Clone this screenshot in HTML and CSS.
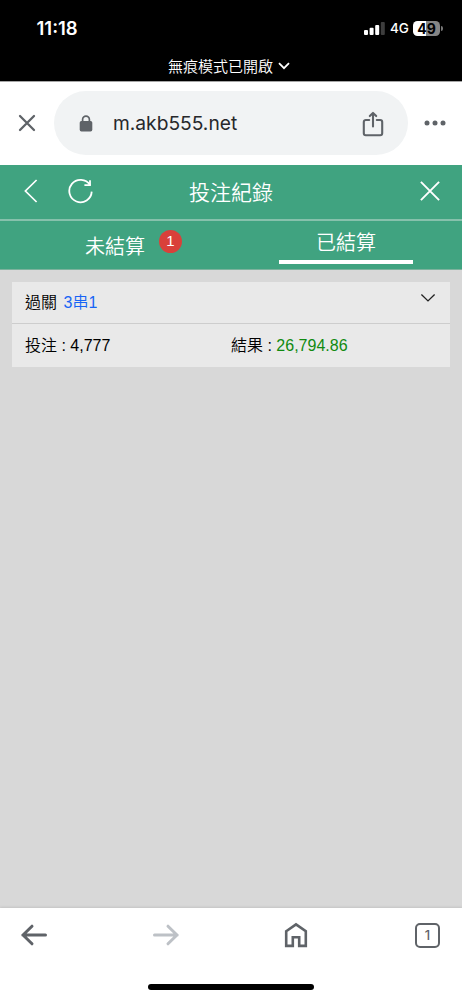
FILE: index.html
```
<!DOCTYPE html>
<html lang="zh-Hant">
<head>
<meta charset="utf-8">
<meta name="viewport" content="width=device-width, initial-scale=1">
<title>投注紀錄</title>
<link rel="stylesheet" href="styles.css">
</head>
<body>
<div class="phone">
  <header class="status">
    <div class="status-row">
      <span class="time">11:18</span>
      <svg class="signal" width="21" height="13" viewBox="0 0 21 13">
        <rect x="0" y="8" width="4" height="5" rx="1" fill="#fff"/>
        <rect x="5.6" y="5.8" width="4" height="7.2" rx="1" fill="#fff"/>
        <rect x="11.2" y="3" width="4" height="10" rx="1" fill="#fff"/>
        <rect x="16.8" y="0" width="4" height="13" rx="1" fill="#3d3d3d"/>
      </svg>
      <span class="network">4G</span>
      <span class="battery">49</span>
      <span class="battery-tip"></span>
    </div>
    <div class="private"><span>無痕模式已開啟</span>
      <svg width="12" height="8" viewBox="0 0 12 8"><path d="M1 1.2 6 6.2 11 1.2" fill="none" stroke="#fff" stroke-width="1.8"/></svg>
    </div>
  </header>

  <div class="browser-bar">
    <svg class="stop" width="18" height="18" viewBox="0 0 18 18"><path d="M2 2 16 16M16 2 2 16" fill="none" stroke="#5f6368" stroke-width="2.3" stroke-linecap="round"/></svg>
    <div class="address">
      <svg class="lock" width="14" height="17" viewBox="0 0 14 17"><path d="M3.6 7V4.6a3.4 3.4 0 0 1 6.8 0V7" fill="none" stroke="#5f6368" stroke-width="1.7"/><rect x="0.7" y="6.1" width="12.6" height="10.4" rx="1.7" fill="#5f6368"/></svg>
      <span class="url">m.akb555.net</span>
      <svg class="share" width="22" height="26" viewBox="0 0 22 26"><path d="M7.2 9H3.8A2 2 0 0 0 1.8 11v11.2a2 2 0 0 0 2 2h14.4a2 2 0 0 0 2-2V11a2 2 0 0 0-2-2h-3.4M11 15.5V2.2M7.8 5.1 11 1.9 14.2 5.1" fill="none" stroke="#5f6368" stroke-width="2.1" stroke-linecap="round" stroke-linejoin="round"/></svg>
    </div>
    <svg class="more" width="22" height="6" viewBox="0 0 22 6" fill="#5f6368"><circle cx="3" cy="3" r="2.5"/><circle cx="11" cy="3" r="2.5"/><circle cx="19" cy="3" r="2.5"/></svg>
  </div>

  <div class="title-bar">
    <svg class="back" width="14" height="26" viewBox="0 0 14 26"><path d="M12.6 2 1.4 13 12.6 24" fill="none" stroke="#fff" stroke-width="1.7"/></svg>
    <svg class="reload" width="26" height="26" viewBox="0 0 26 26" fill="none" stroke="#fff"><path d="M22 7.1A11.2 11.2 0 1 0 23.7 13.6" stroke-width="1.8"/><path d="M22 2.2V7.1H16.4" stroke-width="1.8"/></svg>
    <h1>投注紀錄</h1>
    <svg class="dismiss" width="20" height="20" viewBox="0 0 20 20"><path d="M.9.9 19.1 19.1M19.1.9.9 19.1" fill="none" stroke="#fff" stroke-width="1.9"/></svg>
  </div>

  <nav class="tabs">
    <div class="tab"><span class="tab-label">未結算</span><span class="badge">1</span></div>
    <div class="tab tab-active"><span class="tab-label">已結算</span></div>
  </nav>

  <main class="content">
    <article class="bet">
      <div class="bet-head">
        <span>過關</span><span class="combo">3串1</span>
        <svg class="expand" width="16" height="10" viewBox="0 0 16 10"><path d="M1.4 1.5 8 7.9 14.6 1.5" fill="none" stroke="#222" stroke-width="1.35"/></svg>
      </div>
      <div class="bet-body">
        <div class="stake">投注 : 4,777</div>
        <div class="result">結果 : <span class="win">26,794.86</span></div>
      </div>
    </article>
  </main>

  <footer class="bottom">
    <div class="nav">
      <svg class="prev" width="28" height="24" viewBox="0 0 28 24"><path d="M25.5 12H2.8M12 3.2 3 12l9 8.8" fill="none" stroke="#5f6368" stroke-width="3" stroke-linecap="round" stroke-linejoin="round"/></svg>
      <svg class="next" width="28" height="24" viewBox="0 0 28 24"><path d="M2.5 12H25.2M16 3.2 25 12l-9 8.8" fill="none" stroke="#bdc1c6" stroke-width="3" stroke-linecap="round" stroke-linejoin="round"/></svg>
      <svg class="home" width="24" height="26" viewBox="0 0 24 26"><path d="M2.2 9.2 12 2.4 21.8 9.2V23.9H15.2V15.2H8.8V23.9H2.2Z" fill="none" stroke="#5f6368" stroke-width="2.6"/></svg>
      <span class="count">1</span>
    </div>
    <div class="home-indicator"></div>
  </footer>
</div>
</body>
</html>
```
FILE: styles.css
```
* { box-sizing: border-box; }
body { margin: 0; font-family: "Liberation Sans", "Noto Sans CJK TC", sans-serif; }
svg { display: block; flex: none; }
.phone { width: 462px; height: 1000px; display: flex; flex-direction: column; background: #d8d8d8; overflow: hidden; }

.status { height: 82px; flex: none; background: #000; color: #fff; border-bottom: 1px solid #a6a6a6; }
.status-row { height: 56px; display: flex; align-items: center; padding-left: 36.5px; }
.time { width: 327.5px; font: 600 18.5px/20px Inter, sans-serif; }
.network { margin-left: 5px; width: 19px; font: 500 13.5px/16px Inter, sans-serif; }
.battery { margin-left: 4px; width: 27px; height: 15px; border-radius: 4.5px; background: linear-gradient(90deg, #fff 50%, #858585 50%); color: #000; font: 700 14px/15px Inter, sans-serif; text-align: center; }
.battery-tip { margin-left: 1px; width: 2px; height: 5px; border-radius: 0 2px 2px 0; background: #777; }
.private { display: flex; justify-content: center; align-items: center; gap: 5px; height: 20px; padding-right: 4px; font: 350 15px/20px "Noto Sans CJK TC", sans-serif; }

.browser-bar { height: 83px; flex: none; display: flex; align-items: center; background: #fff; padding: 0 0 1px 18px; }
.address { margin-left: 18px; width: 354px; height: 64px; border-radius: 32px; background: #f1f3f4; display: flex; align-items: center; padding: 0 24px 0 25px; }
.url { margin-left: 20px; font: 400 19.2px/24px Inter, sans-serif; color: #26282b; }
.share { margin-left: auto; margin-top: 2px; }
.more { margin-left: 16px; }

.title-bar { height: 56px; flex: none; display: flex; align-items: center; padding: 0 22px 2px 24px; background: #40a380; color: #fff; border-bottom: 2px solid #86c1ac; }
.reload { margin-left: 30px; }
.title-bar h1 { margin: 0 0 0 95px; font: 350 21px/30px "Noto Sans CJK TC", sans-serif; }
.dismiss { margin-left: auto; }
.tabs { height: 49px; flex: none; display: grid; grid-template-columns: 1fr 1fr; background: #40a380; color: #fff; border-bottom: 1px solid #7db29d; }
.tab { display: flex; align-items: flex-start; padding: 8px 0 0 85px; font: 350 20px/34px "Noto Sans CJK TC", sans-serif; }
.badge { margin: 1px 0 0 14px; width: 23px; height: 23px; border-radius: 50%; background: #d9403a; font: 15px/22px "Liberation Sans", sans-serif; text-align: center; }
.tab-active { width: 134px; margin-left: 48px; height: 43px; padding: 4px 0 0; justify-content: center; border-bottom: 4px solid #fff; }

.content { flex: 1; padding: 12px 12px 0; background: #d8d8d8; }
.bet { background: #e9e9e9; font-size: 16px; font-weight: 350; line-height: 24px; color: #000; }
.bet-head { height: 42px; display: flex; align-items: center; padding: 0 14px 0 13px; border-bottom: 1px solid #cdcdcd; }
.combo { margin-left: 6.5px; color: #1764f5; }
.expand { margin: -9px 0 0 auto; }
.bet-body { height: 43px; display: flex; align-items: center; padding-left: 13px; }
.stake { width: 206px; }
.win { color: #108a10; }

.bottom { height: 92px; flex: none; background: #fff; box-shadow: 0 -1px 2px #c4c4c4; }
.nav { height: 54px; display: flex; align-items: center; padding-left: 20px; }
.next { margin-left: 104px; }
.home { margin-left: 104px; }
.count { margin-left: 107px; width: 25px; height: 25px; border: 2px solid #5f6368; border-radius: 5px; color: #5f6368; font: 500 13px/21px Inter, sans-serif; text-align: center; }
.home-indicator { width: 166px; height: 6px; margin: 22px 0 0 148px; border-radius: 3px; background: #000; }
```
